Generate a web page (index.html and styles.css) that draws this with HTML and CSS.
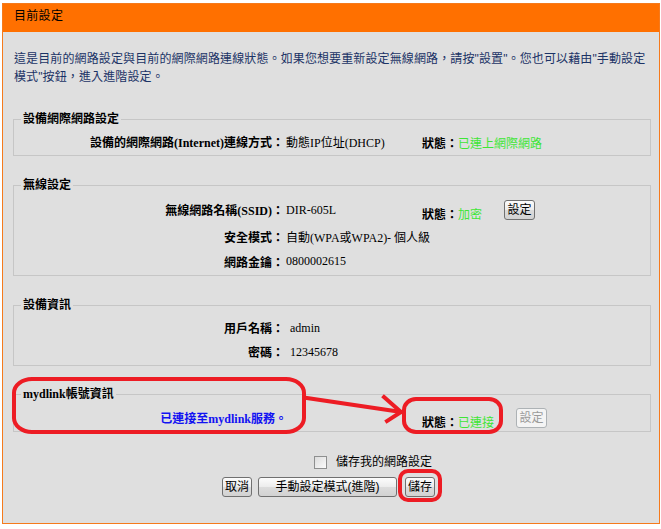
FILE: index.html
```html
<!DOCTYPE html>
<html lang="zh-Hant">
<head>
<meta charset="utf-8">
<title>目前設定</title>
<link rel="stylesheet" href="styles.css">
</head>
<body>
<div class="panel">
  <div class="head">目前設定</div>
  <div class="content">
    <p class="intro">這是目前的網路設定與目前的網際網路連線狀態。如果您想要重新設定無線網路，請按"設置"。您也可以藉由"手動設定模式"按鈕，進入進階設定。</p>

    <fieldset class="fs fs1">
      <legend>設備網際網路設定</legend>
      <div class="row">
        <div class="lbl">設備的網際網路(Internet)連線方式：</div>
        <div class="val">動態IP位址(DHCP)</div>
        <div class="status"><span class="st"><b>狀態：</b><span class="ok">已連上網際網路</span></span></div>
      </div>
    </fieldset>

    <fieldset class="fs fs2">
      <legend>無線設定</legend>
      <div class="row r-tall">
        <div class="lbl">無線網路名稱(SSID)：</div>
        <div class="val">DIR-605L</div>
        <div class="status"><span class="st low"><b>狀態：</b><span class="ok">加密</span></span><button class="btn side">設定</button></div>
      </div>
      <div class="row r-mid">
        <div class="lbl">安全模式：</div>
        <div class="val">自動(WPA或WPA2)- 個人級</div>
      </div>
      <div class="row r-mid">
        <div class="lbl">網路金鑰：</div>
        <div class="val">0800002615</div>
      </div>
    </fieldset>

    <fieldset class="fs fs3">
      <legend>設備資訊</legend>
      <div class="row">
        <div class="lbl">用戶名稱：</div>
        <div class="val indent">admin</div>
      </div>
      <div class="row">
        <div class="lbl">密碼：</div>
        <div class="val indent">12345678</div>
      </div>
    </fieldset>

    <fieldset class="fs fs4">
      <legend>mydlink帳號資訊</legend>
      <div class="row r-link">
        <div class="lbl link">已連接至mydlink服務。</div>
        <div class="val"></div>
        <div class="status"><span class="st low"><b>狀態：</b><span class="ok">已連接</span></span><button class="btn side" disabled>設定</button></div>
      </div>
    </fieldset>

    <div class="save-row">
      <span class="check"></span>
      <span class="save-label">儲存我的網路設定</span>
    </div>

    <div class="btn-row">
      <button class="btn">取消</button>
      <button class="btn wide">手動設定模式(進階)</button>
      <button class="btn">儲存</button>
    </div>
  </div>
</div>

<svg class="marks" width="661" height="529" viewBox="0 0 661 529" xmlns="http://www.w3.org/2000/svg">
  <g fill="none" stroke="#ed1c24" stroke-width="4" stroke-linejoin="round">
    <rect x="14" y="379" width="290" height="53" rx="18" ry="14"/>
    <path d="M307 398 L401 412" stroke-linecap="square"/>
    <path d="M384 397 L401 412 L387 421" stroke-linecap="square"/>
    <rect x="404" y="399" width="97" height="33" rx="12" ry="11"/>
    <rect x="400" y="471" width="40" height="29" rx="8" ry="8"/>
  </g>
</svg>
</body>
</html>
```

FILE: styles.css
```css
html, body {
  margin: 0;
  padding: 0;
  background: #ffffff;
}

body {
  position: relative;
  width: 661px;
  height: 529px;
  overflow: hidden;
  font-family: "Liberation Sans", "Noto Sans CJK TC", sans-serif;
  font-size: 12px;
  color: #000;
}

.panel {
  margin: 3px 0 0 2px;
  width: 656px;
  border: 1px solid #f57a1c;
  background: #dfdfdf;
}

.head {
  height: 28px;
  line-height: 24px;
  padding-left: 11px;
  background: #ff7000;
  color: #000;
  font-size: 12px;
  letter-spacing: 0.3px;
}

.content {
  padding: 18px 8px 26px 10px;
}

.intro {
  margin: 0 0 25px 1px;
  line-height: 18px;
  color: #1b3366;
  font-size: 12px;
  letter-spacing: 0.12px;
}

.fs {
  margin: 0 0 21px 0;
  padding: 3px 0 1px 0;
  border: 1px solid #c6c6c6;
  min-width: 0;
}

.fs legend {
  margin-left: 7px;
  padding: 0 2px;
  line-height: 16px;
  font-family: "Liberation Serif", "Noto Sans CJK TC", serif;
  font-weight: bold;
  font-size: 12px;
}

.fs4 {
  margin-bottom: 0;
  padding-bottom: 0;
}

.fs3 {
  margin-bottom: 20px;
}

.row {
  display: flex;
  align-items: center;
  height: 24px;
  font-family: "Liberation Serif", "Noto Sans CJK TC", serif;
  white-space: nowrap;
}

.r-tall { height: 28px; }
.r-mid { height: 25px; }
.r-link { height: 26px; }

.lbl {
  flex: none;
  width: 270px;
  text-align: right;
  font-weight: bold;
}

.val {
  flex: none;
  width: 136px;
  padding-left: 2px;
}

.val.indent {
  padding-left: 6px;
}

.link {
  color: #1212f2;
  margin-right: -3px;
  width: 273px;
}

.r-link .val {
  width: 136px;
}

.status {
  display: flex;
  align-items: center;
}

.st {
  display: inline-block;
  font-family: "Liberation Sans", "Noto Sans CJK TC", sans-serif;
}

.st b {
  font-weight: bold;
}

.st.low {
  margin-top: 7px;
}

.ok {
  color: #3ee636;
}

.btn {
  box-sizing: border-box;
  height: 20px;
  margin: 0;
  padding: 0;
  border: 1px solid #707070;
  border-radius: 3px;
  background: linear-gradient(#fcfcfc, #ececec 50%, #dcdcdc 51%, #d2d2d2);
  font-family: "Liberation Sans", "Noto Sans CJK TC", sans-serif;
  font-size: 12px;
  line-height: 16px;
  color: #000;
  white-space: nowrap;
  text-align: center;
}

.btn:disabled {
  border-color: #adb2b5;
  background: #f4f4f4;
  color: #9a9a9a;
}

.side {
  margin-left: 22px;
  width: 31px;
}

.save-row {
  display: flex;
  align-items: center;
  height: 18px;
  margin-top: 21px;
  padding-left: 301px;
}

.check {
  box-sizing: border-box;
  width: 13px;
  height: 13px;
  border: 1px solid #8e8f8f;
  background: linear-gradient(135deg, #dcdcdc, #fbfbfb);
}

.save-label {
  margin-left: 9px;
  line-height: 18px;
}

.btn-row {
  display: flex;
  margin-top: 6px;
  padding-left: 209px;
}

.btn-row .btn {
  width: 30px;
}

.btn-row .btn.wide {
  width: 139px;
  margin: 0 8px 0 6px;
}

.marks {
  position: absolute;
  left: 0;
  top: 0;
  pointer-events: none;
}
```
